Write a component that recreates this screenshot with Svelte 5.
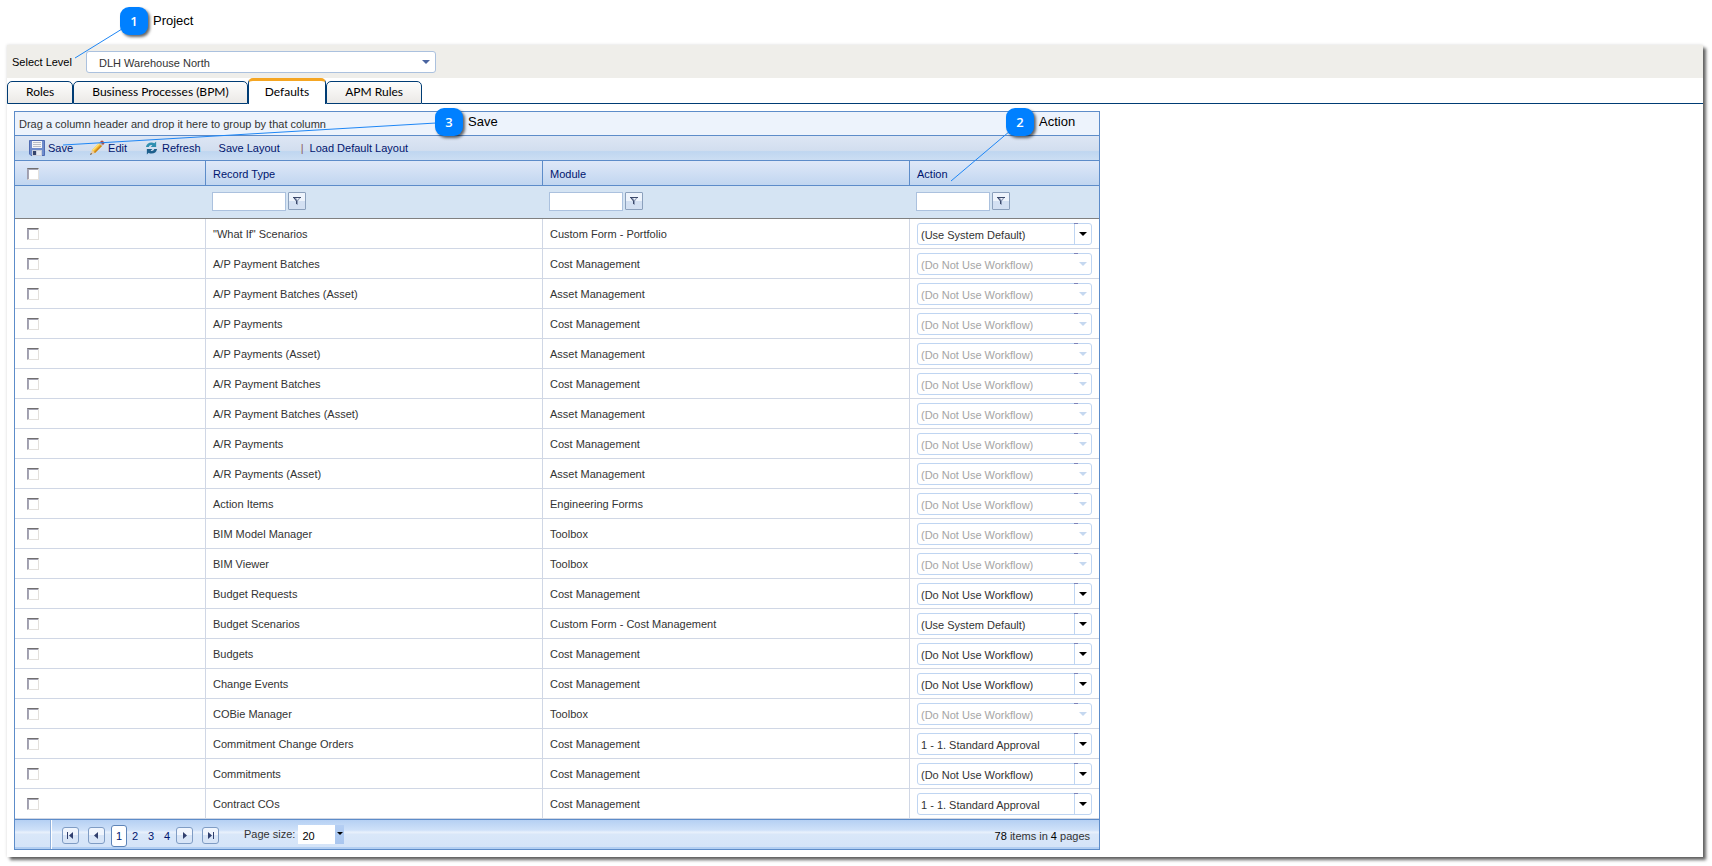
<script lang="ts">
	type Row = { type: string; module: string; action: string; locked: boolean };

	const NONE = "(Do Not Use Workflow)";
	const SYSTEM = "(Use System Default)";
	const STANDARD = "1 - 1. Standard Approval";
	const actions = [SYSTEM, NONE, STANDARD];

	const row = (type: string, module: string, action = NONE, locked = false): Row => ({ type, module, action, locked });

	let rows = $state<Row[]>([
		row('"What If" Scenarios', "Custom Form - Portfolio", SYSTEM),
		row("A/P Payment Batches", "Cost Management", NONE, true),
		row("A/P Payment Batches (Asset)", "Asset Management", NONE, true),
		row("A/P Payments", "Cost Management", NONE, true),
		row("A/P Payments (Asset)", "Asset Management", NONE, true),
		row("A/R Payment Batches", "Cost Management", NONE, true),
		row("A/R Payment Batches (Asset)", "Asset Management", NONE, true),
		row("A/R Payments", "Cost Management", NONE, true),
		row("A/R Payments (Asset)", "Asset Management", NONE, true),
		row("Action Items", "Engineering Forms", NONE, true),
		row("BIM Model Manager", "Toolbox", NONE, true),
		row("BIM Viewer", "Toolbox", NONE, true),
		row("Budget Requests", "Cost Management"),
		row("Budget Scenarios", "Custom Form - Cost Management", SYSTEM),
		row("Budgets", "Cost Management"),
		row("Change Events", "Cost Management"),
		row("COBie Manager", "Toolbox", NONE, true),
		row("Commitment Change Orders", "Cost Management", STANDARD),
		row("Commitments", "Cost Management"),
		row("Contract COs", "Cost Management", STANDARD)
	]);

	const tabs = ["Roles", "Business Processes (BPM)", "Defaults", "APM Rules"];
	const columns = ["Record Type", "Module", "Action"];
	const pages = [1, 2, 3, 4];

	let activeTab = $state("Defaults");
	let page = $state(1);
</script>

<div class="screen">
	<main class="panel">
		<div class="level-bar">
			<label for="level">Select Level</label>
			<span class="level-box">
				<select id="level">
					<option>DLH Warehouse North</option>
				</select>
			</span>
		</div>

		<div class="tabs" role="tablist">
			{#each tabs as tab}
				<button role="tab" class:active={tab === activeTab} aria-selected={tab === activeTab} onclick={() => (activeTab = tab)}>
					{tab}
				</button>
			{/each}
		</div>

		<section class="grid">
			<div class="group-hint">Drag a column header and drop it here to group by that column</div>

			<div class="toolbar">
				<button class="save">
					<svg width="16" height="16" viewBox="0 0 16 16">
						<path d="M.5 .5h15v15H2L.5 14z" fill="#6f8ccc" stroke="#4f6bb2" />
						<path d="M3 1h10v7H3z" fill="#f4f5f7" />
						<path d="M4 2.5h8M4 4.5h8M4 6.5h8" stroke="#b9bdc6" />
						<path d="M3 10h10v6H3z" fill="#c8cedb" />
						<path d="M4 11h3v4H4z" fill="#35436b" />
						<path d="M8 11h4v4H8z" fill="#e4e8ef" />
					</svg>
					Save
				</button>
				<button class="edit">
					<svg width="16" height="16" viewBox="0 0 16 16">
						<path d="M1 15l2-5 3 3z" fill="#e8c9a0" />
						<path d="M1 15l1-2 1 1z" fill="#333" />
						<path d="M3 10l7-7 3 3-7 7z" fill="#f5b82e" />
						<path d="M3 10l7-7 1 1-7 7z" fill="#ffe27a" />
						<path d="M5 12l7-7 1 1-7 7z" fill="#c9821b" />
						<path d="M10 3l1-1 3 3-1 1z" fill="#b8bcc4" />
						<path d="M11 2l1-1q1-1 2 0l1 1q1 1 0 2l-1 1z" fill="#b4473f" />
					</svg>
					Edit
				</button>
				<button class="refresh">
					<svg width="13" height="14" viewBox="0 0 14 14">
						<path d="M1 6Q2 1 7 1q2 0 3 1l2-2v6H6l2-2Q5 3 4 6z" fill="#2f8fb0" />
						<path d="M13 8q-1 5-6 5-2 0-3-1l-2 2V8h6l-2 2q3 1 4-2z" fill="#1d5f8c" />
					</svg>
					Refresh
				</button>
				<button class="layout">Save Layout</button>
				<span class="bar">|</span>
				<button>Load Default Layout</button>
			</div>

			<table>
				<colgroup>
					<col class="c-check" />
					<col class="c-type" />
					<col class="c-module" />
					<col />
				</colgroup>
				<thead>
					<tr class="titles">
						<th><input type="checkbox" aria-label="Select all" /></th>
						{#each columns as column}
							<th>{column}</th>
						{/each}
					</tr>
					<tr class="filters">
						<td></td>
						{#each columns as column}
							<td>
								<div class="filter">
									<input type="text" aria-label="Filter {column}" />
									<button aria-label="Filter options for {column}">
										<svg width="10" height="10" viewBox="0 0 10 10">
											<path d="M1 1h8L6 5v4L4 8V5z" fill="#8e9cb8" />
											<path d="M1 1.5h8M2 2l2.5 3v3" fill="none" stroke="#3c4a6b" />
											<path d="M4 2h3L5.5 4z" fill="#f1f5fb" />
										</svg>
									</button>
								</div>
							</td>
						{/each}
					</tr>
				</thead>
				<tbody>
					{#each rows as r}
						<tr>
							<td><input type="checkbox" aria-label="Select {r.type}" /></td>
							<td>{r.type}</td>
							<td>{r.module}</td>
							<td class="action">
								<span class="combo" class:locked={r.locked}>
									<select bind:value={r.action} disabled={r.locked} aria-label="Action for {r.type}">
										{#each actions as action}
											<option>{action}</option>
										{/each}
									</select>
								</span>
							</td>
						</tr>
					{/each}
				</tbody>
			</table>

			<footer class="pager">
				<span class="pager-edge"></span>
				<nav>
					<button class="step" aria-label="First page" onclick={() => (page = 1)}>
						<svg width="9" height="9" viewBox="0 0 9 9"><path d="M1 1h1v7H1zM7 1v7L3 4.5z" /></svg>
					</button>
					<button class="step" aria-label="Previous page" onclick={() => (page = Math.max(1, page - 1))}>
						<svg width="9" height="9" viewBox="0 0 9 9"><path d="M6 1v7L2 4.5z" /></svg>
					</button>
					<div class="numbers">
						{#each pages as n}
							<button class:current={n === page} onclick={() => (page = n)}>{n}</button>
						{/each}
					</div>
					<button class="step" aria-label="Next page" onclick={() => (page = Math.min(4, page + 1))}>
						<svg width="9" height="9" viewBox="0 0 9 9"><path d="M3 1v7l4-3.5z" /></svg>
					</button>
					<button class="step" aria-label="Last page" onclick={() => (page = 4)}>
						<svg width="9" height="9" viewBox="0 0 9 9"><path d="M2 1v7l4-3.5zM7 1h1v7H7z" /></svg>
					</button>
				</nav>
				<label for="page-size">Page size:</label>
				<span class="size-box">
					<select id="page-size">
						<option>20</option>
						<option>50</option>
					</select>
				</span>
				<p><b>78</b> items in <b>4</b> pages</p>
			</footer>
		</section>
	</main>

	<svg class="leaders" width="1100" height="200">
		<path d="M122 29L75 58M436 123L63 145M1010 131L951 181" />
	</svg>
	<div class="callout project"><span>1</span>Project</div>
	<div class="callout save-note"><span>3</span>Save</div>
	<div class="callout action-note"><span>2</span>Action</div>
</div>

<style>
	:global(body) {
		background: #fff;
	}

	.screen {
		position: relative;
		padding: 45px 9px 9px 7px;
		font: 11px/14px "Liberation Sans", Arial, sans-serif;
		color: #333;
	}

	.panel {
		padding-bottom: 7px;
		background: #fff;
		box-shadow:
			3px 3px 3px rgba(0, 0, 0, 0.6),
			0 0 3px rgba(0, 0, 0, 0.15);
	}

	button,
	select,
	input {
		font: inherit;
		color: inherit;
		margin: 0;
		box-sizing: border-box;
	}

	button {
		padding: 0;
		border: 0;
		background: none;
		cursor: pointer;
	}

	select {
		appearance: none;
		width: 100%;
		outline: none;
	}

	.level-bar {
		display: flex;
		align-items: center;
		gap: 15px;
		height: 33px;
		padding-left: 5px;
		background: #efeeea;
		color: #000;

		label {
			width: 59px;
			margin-top: 1px;
			white-space: nowrap;
		}
	}

	.level-box {
		position: relative;
		width: 350px;

		select {
			display: block;
			height: 22px;
			padding: 3px 20px 0 12px;
			border: 1px solid #abc1de;
			border-radius: 3px;
			background: #fff;
			color: #333;
		}

		&::after {
			content: "";
			position: absolute;
			top: 9px;
			right: 6px;
			border: 4px solid transparent;
			border-top-color: #4a64a0;
			border-bottom: 0;
			pointer-events: none;
		}
	}

	.tabs {
		display: flex;
		align-items: flex-end;
		height: 26px;
		font: 12px/20px Lato, "Segoe UI", sans-serif;
		color: #000;

		&::after {
			content: "";
			flex: 1;
			border-bottom: 1px solid #003c74;
		}

		button {
			height: 23px;
			padding: 0 18px 2px;
			border: 1px solid #003c74;
			border-radius: 5px 5px 0 0;
			background: linear-gradient(#fdfdfc, #ebe9e6);
			white-space: nowrap;
		}

		.active {
			height: 26px;
			padding: 0 16px 2px;
			border-top: 3px solid #f5a623;
			border-bottom: 0;
			background: #fff;
		}
	}

	.grid {
		max-width: 1084px;
		margin: 7px 7px 0;
		border: 1px solid #5d8cc9;
	}

	.group-hint {
		height: 23px;
		padding-left: 4px;
		line-height: 25px;
		background: #edf3fc;
		border-bottom: 1px solid #5d8cc9;
	}

	.toolbar {
		display: flex;
		align-items: center;
		height: 24px;
		padding-left: 14px;
		border-bottom: 1px solid #5d8cc9;
		background: linear-gradient(#dde6f4 0, #d2deef 60%, #bfd6f0 65%, #ccdef3 100%);
		color: #00156e;

		button {
			display: flex;
			align-items: center;
			gap: 3px;
		}

		.save {
			margin-right: 16px;
		}

		.edit,
		.refresh {
			margin-right: 18px;
		}

		.refresh {
			gap: 4px;
		}

		.layout {
			margin-right: 21px;
		}

		.bar {
			margin-right: 6px;
			color: #8c5b62;
		}
	}

	table {
		width: 100%;
		table-layout: fixed;
		border-collapse: separate;
		border-spacing: 0;
	}

	.c-check {
		width: 191px;
	}

	.c-type {
		width: 337px;
	}

	.c-module {
		width: 367px;
	}

	th,
	td {
		box-sizing: border-box;
		height: 30px;
		padding: 0 7px;
		border: 0 solid #d0d7e5;
		border-width: 0 1px 1px 0;
		text-align: left;
		font-weight: normal;

		&:first-child {
			padding-left: 12px;
		}

		&:last-child {
			border-right: 0;
		}
	}

	.titles th {
		height: 25px;
		padding-top: 1px;
		border-color: #5d8cc9;
		background: linear-gradient(#dfe8f8, #c1d6f0);
		color: #00156e;
	}

	.filters td {
		height: 33px;
		padding: 0 6px 2px;
		border-right: 0;
		border-bottom-color: #808080;
		background: #d5e4f3;
	}

	input[type="checkbox"] {
		appearance: none;
		display: block;
		width: 12px;
		height: 12px;
		border: 1px solid #e3e0dc;
		border-top-color: #716f70;
		border-left-color: #a09eae;
		background: #fff;
		box-shadow: inset 1px 1px #a5a5b4;

		&:checked {
			background: #5d8cc9;
		}
	}

	.filter {
		display: flex;
		align-items: center;
		gap: 2px;

		input {
			width: 74px;
			height: 19px;
			border: 1px solid #abc1de;
			background: #fff;
		}

		button {
			display: grid;
			place-items: center;
			width: 18px;
			height: 18px;
			border: 1px solid #8ba0bc;
			border-radius: 1px;
			background: linear-gradient(#eef4fc 50%, #d3e0f2 50%);
		}
	}

	.combo {
		position: relative;
		display: block;
		color: #333;

		select {
			display: block;
			height: 22px;
			padding: 3px 18px 0 3px;
			border: 1px solid #bfd5f2;
			border-radius: 3px;
			background: linear-gradient(#bfd5f2, #bfd5f2) right 16px top / 1px 100% no-repeat #fff;
			opacity: 1;
		}

		&::before {
			content: "";
			position: absolute;
			top: 0;
			right: 14px;
			width: 4px;
			height: 1px;
			background: #7d83b8;
		}

		&::after {
			content: "";
			position: absolute;
			top: 9px;
			right: 5px;
			border: 4px solid transparent;
			border-top-color: #000;
			border-bottom: 0;
			pointer-events: none;
		}
	}

	.locked {
		color: #a5a5a5;

		select {
			background: #fff;
		}

		&::after {
			border-top-color: #c5d8f0;
		}
	}

	.pager {
		display: flex;
		align-items: center;
		height: 29px;
		border-top: 1px solid #5d8cc9;
		background: linear-gradient(#b5d0f3 0, #cfe1f9 35%, #e9f1fc 42%, #d9e7f9 50%, #d5e4f8 92%, #b2cef2 94%);

		nav {
			display: flex;
			align-items: center;
			gap: 9px;
			margin: 2px 25px 0 11px;
		}

		label {
			margin-bottom: 2px;
		}

		p {
			margin: 2px 9px 0 auto;
		}

		b {
			font-weight: normal;
			color: #000;
		}
	}

	.pager-edge {
		width: 35px;
		height: 100%;
		border-right: 1px solid #8fb0dc;
		box-shadow: 1px 0 #fff;
	}

	.step {
		display: grid;
		place-items: center;
		width: 17px;
		height: 17px;
		border: 1px solid #7f9cc4;
		border-radius: 3px;
		background: linear-gradient(#f0f5fd 50%, #d8e5f7 50%);

		svg {
			fill: #303f6e;
		}
	}

	.numbers {
		display: flex;
		align-items: center;
		margin: 0 -8px 0 -3px;

		button {
			width: 16px;
			height: 22px;
			color: #00156e;
		}

		.current {
			border: 1px solid #5d84b8;
			border-radius: 3px;
			background: #fff;
		}
	}

	.size-box {
		position: relative;
		width: 46px;
		margin-left: 3px;
		color: #000;

		select {
			display: block;
			height: 19px;
			padding: 3px 0 0 4px;
			border: 0;
			border-radius: 0;
			background: linear-gradient(#b4cef3, #a9c6ef) right / 9px 100% no-repeat #fff;
		}

		&::after {
			content: "";
			position: absolute;
			top: 7px;
			right: 1px;
			border: 3px solid transparent;
			border-top-color: #000;
			border-bottom: 0;
			pointer-events: none;
		}
	}

	.leaders {
		position: absolute;
		top: 0;
		left: 0;
		fill: none;
		stroke: #1e86f5;
		pointer-events: none;
	}

	.callout {
		position: absolute;
		display: flex;
		align-items: center;
		gap: 5px;
		font-size: 13px;
		line-height: 16px;
		color: #000;
		pointer-events: none;

		span {
			display: grid;
			place-items: center;
			width: 28px;
			height: 28px;
			border-radius: 9px;
			background: #0080ff;
			box-shadow: 2px 2px 3px rgba(0, 0, 0, 0.6);
			font: 600 13px "Open Sans", sans-serif;
			color: #fff;
		}
	}

	.project {
		top: 7px;
		left: 120px;
	}

	.save-note {
		top: 108px;
		left: 435px;
	}

	.action-note {
		top: 108px;
		left: 1006px;
	}
</style>
